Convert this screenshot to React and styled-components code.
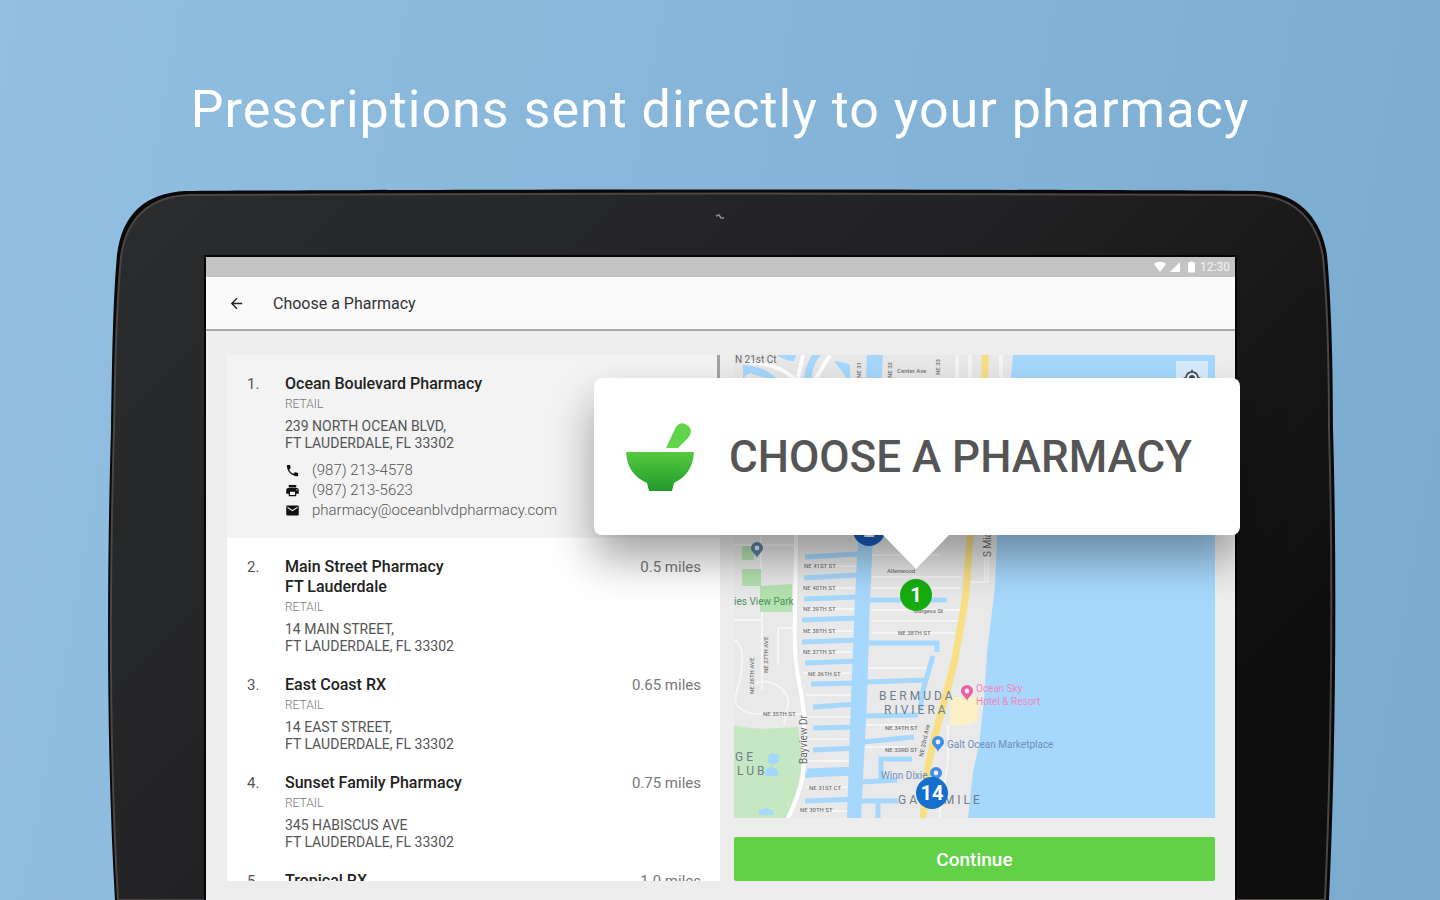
import styled, { createGlobalStyle } from 'styled-components';
import { MdArrowBack, MdEmail, MdGpsFixed, MdPhone, MdPrint } from 'react-icons/md';

const pharmacies = [
  {
    id: 1,
    name: ['Ocean Boulevard Pharmacy'],
    address: ['239 NORTH OCEAN BLVD,', 'FT LAUDERDALE, FL 33302'],
    phone: '(987) 213-4578',
    fax: '(987) 213-5623',
    email: 'pharmacy@oceanblvdpharmacy.com',
  },
  {
    id: 2,
    name: ['Main Street Pharmacy', 'FT Lauderdale'],
    address: ['14 MAIN STREET,', 'FT LAUDERDALE, FL 33302'],
    distance: '0.5 miles',
  },
  {
    id: 3,
    name: ['East Coast RX'],
    address: ['14 EAST STREET,', 'FT LAUDERDALE, FL 33302'],
    distance: '0.65 miles',
  },
  {
    id: 4,
    name: ['Sunset Family Pharmacy'],
    address: ['345 HABISCUS AVE', 'FT LAUDERDALE, FL 33302'],
    distance: '0.75 miles',
  },
  {
    id: 5,
    name: ['Tropical RX'],
    address: [],
    distance: '1.0 miles',
  },
];

export default function App() {
  return (
    <>
      <GlobalStyle />
      <Page>
        <Headline>Prescriptions sent directly to your pharmacy</Headline>
        <Tablet>
          <Casing />
          <Screen>
            <StatusBar>
              <StatusIcons />
              <span>12:30</span>
            </StatusBar>
            <AppBar>
              <BackButton aria-label="Back">
                <MdArrowBack />
              </BackButton>
              <AppTitle>Choose a Pharmacy</AppTitle>
            </AppBar>
            <Content>
              <List>
                {pharmacies.map((pharmacy) => (
                  <Pharmacy key={pharmacy.id} {...pharmacy} />
                ))}
              </List>
              <MapColumn>
                <MapFrame>
                  <StreetMap />
                  <LocateButton aria-label="My location">
                    <MdGpsFixed />
                  </LocateButton>
                </MapFrame>
                <ContinueButton>Continue</ContinueButton>
              </MapColumn>
            </Content>
            <Callout>
              <MortarIcon />
              <span>CHOOSE A PHARMACY</span>
            </Callout>
          </Screen>
        </Tablet>
      </Page>
    </>
  );
}

function Pharmacy({ id, name, address, distance, phone, fax, email }) {
  return (
    <Item $selected={Boolean(phone)}>
      <Number>{id}.</Number>
      <div>
        {name.map((line) => (
          <Name key={line}>{line}</Name>
        ))}
        {address.length > 0 && <Kind>RETAIL</Kind>}
        {address.map((line) => (
          <Address key={line}>{line}</Address>
        ))}
        {phone && (
          <Contacts>
            <Contact href="tel:9872134578">
              <MdPhone />
              {phone}
            </Contact>
            <Contact href="fax:9872135623">
              <MdPrint />
              {fax}
            </Contact>
            <Contact href={`mailto:${email}`}>
              <MdEmail />
              {email}
            </Contact>
          </Contacts>
        )}
      </div>
      <Distance>{distance}</Distance>
    </Item>
  );
}

function Casing() {
  return (
    <CasingSvg viewBox="0 0 1224 712" preserveAspectRatio="none" aria-hidden="true">
      <defs>
        <linearGradient id="bezel" x1="0" y1="0" x2="1" y2="0.6">
          <stop offset="0" stopColor="#2a2c2d" />
          <stop offset="0.55" stopColor="#212123" />
          <stop offset="1" stopColor="#0e0e0e" />
        </linearGradient>
      </defs>
      <path
        d="M5 712C-4 560 -3 380 1 240C2 170 3 110 7 66C12 26 34 4 76 2C300 0 900 0 1148 2C1188 4 1211 28 1217 66C1221 110 1223 170 1223 240C1227 380 1226 560 1219 712Z"
        fill="#0a0808"
      />
      <path
        d="M8 712C-1 560 0 380 4 240C5 170 7 110 11 68C16 31 38 7 80 6C300 4 900 4 1144 6C1184 7 1207 31 1213 68C1217 110 1219 170 1219 240C1223 380 1222 560 1215 712Z"
        fill="url(#bezel)"
        stroke="#4b4643"
        strokeWidth="2"
      />
      <path d="M606 27l3 -1 2 3 3 0" stroke="#8e8e8e" strokeWidth="1.5" fill="none" />
    </CasingSvg>
  );
}

function StatusIcons() {
  return (
    <svg width="42" height="12" viewBox="0 0 42 12" fill="#fff" aria-hidden="true">
      <path d="M0 3.2C3.6 0 8.4 0 12 3.2L6 11Z" />
      <path d="M26 1V11H16Z" />
      <path d="M34 1.6H36V0.6H39V1.6H41V11.4H34Z" />
    </svg>
  );
}

function MortarIcon() {
  return (
    <svg width="68" height="68" viewBox="0 0 68 68" aria-hidden="true">
      <defs>
        <linearGradient id="bowl" x1="0" y1="0" x2="0" y2="1">
          <stop offset="0" stopColor="#55c93f" />
          <stop offset="1" stopColor="#219a2b" />
        </linearGradient>
      </defs>
      <path d="M40 25L48 8C51 1 55 -2 61 2C66 5 66 10 62 15L52 25Z" fill="#60d44a" />
      <path d="M0 29H68C67 45 60 54 48 60L46 68H23L21 60C8 54 1 45 0 29Z" fill="url(#bowl)" />
    </svg>
  );
}

const leftCanals = [
  [805, 557, 554], [804, 578, 575], [804, 599, 597], [802, 620, 618], [802, 642, 640],
  [805, 663, 661], [811, 684, 683], [813, 707, 704], [813, 728, 727], [813, 750, 748],
  [805, 775, 772], [805, 801, 799],
];

const streets = [
  ['NE 41ST ST', 804, 568], ['NE 40TH ST', 803, 590], ['NE 39TH ST', 803, 611],
  ['NE 38TH ST', 803, 633], ['NE 37TH ST', 803, 654], ['NE 36TH ST', 808, 676],
  ['NE 35TH ST', 763, 716], ['NE 31ST CT', 809, 790], ['NE 30TH ST', 800, 812],
  ['NE 38TH ST', 898, 635], ['NE 34TH ST', 885, 730], ['NE 33RD ST', 885, 752],
  ['Allenwood', 887, 573], ['Center Ave', 897, 373], ['Burgess St', 914, 613],
];

function Pin({ x, y, color }) {
  return (
    <g transform={`translate(${x} ${y})`}>
      <path d="M0 8C-1 4 -6 2 -6 -2A6 6 0 0 1 6 -2C6 2 1 4 0 8Z" fill={color} />
      <circle cy="-2" r="2.4" fill="#e9edf2" />
    </g>
  );
}

function Marker({ x, y, color, children }) {
  return (
    <g>
      <circle cx={x} cy={y} r="16" fill={color} />
      <MarkerText x={x} y={y + 7} textAnchor="middle">
        {children}
      </MarkerText>
    </g>
  );
}

function StreetMap() {
  return (
    <MapSvg viewBox="734 355 481 463" preserveAspectRatio="xMidYMid slice" role="img" aria-label="Map">
      <rect x="734" y="355" width="481" height="463" fill="#e9e9e9" />

      {/* parks */}
      <path d="M734 725C755 731 775 728 798 727L802 757C800 785 793 803 787 818H734Z" fill="#c5e7c2" />
      <path d="M742 569H761V586H742ZM760 586L792 584V612H760ZM742 546H754V560H742Z" fill="#b4e2b0" />
      <path d="M951 697H980L977 720C970 727 960 725 950 725Z" fill="#fbf0c8" />

      {/* small streets */}
      <g stroke="#f5f5f5" strokeWidth="2" fill="none">
        <path d="M734 545H795M761 535V569M734 620H762M762 612V690M778 628H796M778 628V665M734 640C748 645 741 680 736 694C732 708 748 718 768 712" />
        <path d="M754 684C770 676 790 690 788 704L784 724M765 714H802" />
        <path d="M872 555H940M872 577H962M872 588H960M872 610H960M872 621H958M872 633H955M866 668H930M866 725H915M866 747H905" />
        <path d="M803 566H856M802 588H855M802 609H855M801 631H853M801 652H852M803 673H850M806 695H850M808 717H850M808 739H849M808 761H849M806 787H848M803 811H847" />
        <path d="M985 535V582H970M988 552V582H970M948 725V750C950 770 940 790 940 818" />
        <path d="M957 355V378M970 355V378M1001 355V378" strokeWidth="4" />
      </g>
      <path
        d="M796 535C796 580 794 620 795 650C796 675 801 685 803 707C805 725 805 745 803 775C801 790 794 805 788 818"
        stroke="#fff"
        strokeWidth="4"
        fill="none"
      />

      {/* water */}
      <g fill="#a6d8fd" stroke="none">
        <path d="M1013 355H1215V818H968L973 772L979 745L984 700L987 653L995 587L997 535Z" />
        <path d="M867 355H883L873 535L870 600L867 700L861 818H847L851 700L855 600L858 535Z" />
        <path d="M743 365C755 366 766 368 776 378H765L750 373L743 378ZM777 355H796L794 361C788 361 782 359 777 355ZM812 355H821C814 363 812 370 812 378H804C805 368 808 362 812 355ZM834 361C842 362 846 363 850 365V378H846C843 371 838 367 834 361Z" />
        <path d="M768 756L772 753L779 755V762L772 765L768 762ZM765 770L771 766L778 770V776H765ZM759 810L767 808L773 811V815H759Z" />
      </g>
      <g stroke="#a6d8fd" strokeWidth="5" fill="none">
        {leftCanals.map(([x, from, to]) => (
          <path key={from} d={`M${x} ${from}L858 ${to}`} />
        ))}
        <path d="M807 773L856 771" strokeWidth="9" />
        <path d="M868 600H947M865 643H937V652M933 656L923 690L920 710M865 682L927 680M862 716L918 715M863 742L914 737M912 759H881V780M860 782L897 780M860 801H898M878 801V818" />
      </g>
      <path d="M745 362C765 362 782 368 794 378M798 378L803 355M816 378L830 355" stroke="#fff" strokeWidth="4" fill="none" />

      {/* coast road */}
      <path
        d="M985 355C985 440 973 480 970 535C968 560 967 585 965 600C962 620 959 636 957 647C955 662 951 675 948 687C942 710 934 735 928 767L923 818"
        stroke="#f9df84"
        strokeWidth="7"
        fill="none"
      />

      <StreetText>
        {streets.map(([name, x, y]) => (
          <text key={`${x}-${y}`} x={x} y={y}>
            {name}
          </text>
        ))}
        <text transform="translate(754 694) rotate(-90)">NE 26TH AVE</text>
        <text transform="translate(768 673) rotate(-90)">NE 27TH AVE</text>
        <text transform="translate(923 757) rotate(-78)">NE 33rd Ave</text>
        <text transform="translate(861 378) rotate(-90)">NE 31</text>
        <text transform="translate(892 378) rotate(-90)">NE 32</text>
        <text transform="translate(940 375) rotate(-90)">NE 33</text>
      </StreetText>
      <PlaceText $color="#6a6a6a">
        <text x="735" y="363">N 21st Ct</text>
        <text transform="translate(807 764) rotate(-90)">Bayview Dr</text>
        <text transform="translate(991 557) rotate(-90)">S Miami Rd</text>
      </PlaceText>
      <PlaceText $color="#4e9460">
        <text x="734" y="605">ies View Park</text>
      </PlaceText>
      <PlaceText $color="#f386bd">
        <text x="976" y="692">Ocean Sky</text>
        <text x="976" y="705">Hotel & Resort</text>
      </PlaceText>
      <PlaceText $color="#6f8fbd">
        <text x="947" y="748">Galt Ocean Marketplace</text>
        <text x="881" y="779">Winn Dixie</text>
      </PlaceText>
      <AreaText>
        <text x="879" y="700">BERMUDA</text>
        <text x="884" y="714">RIVIERA</text>
        <text x="898" y="804">GALT MILE</text>
        <text x="735" y="761">GE</text>
        <text x="737" y="775">LUB</text>
      </AreaText>

      <Pin x={757} y={550} color="#5c84a3" />
      <Pin x={967} y={693} color="#ef5fa5" />
      <Pin x={938} y={744} color="#3f8fe8" />
      <Pin x={936} y={775} color="#3f8fe8" />
      <Marker x={869} y={530} color="#1a5fc0">2</Marker>
      <Marker x={916} y={595} color="#17ad10">1</Marker>
      <Marker x={932} y={793} color="#1470cc">14</Marker>
    </MapSvg>
  );
}

const GlobalStyle = createGlobalStyle`
  * {
    box-sizing: border-box;
  }
  body {
    margin: 0;
    font-family: Roboto, "Liberation Sans", sans-serif;
  }
  button {
    font-family: inherit;
    border: none;
    cursor: pointer;
  }
`;

const Page = styled.main`
  height: 100vh;
  min-height: 640px;
  display: flex;
  flex-direction: column;
  overflow: hidden;
  background: linear-gradient(100deg, #92bfe1 0%, #86b5d9 50%, #7aabcf 100%);
`;

const Headline = styled.h1`
  margin: 0;
  padding: 78px 24px 48px;
  font-size: 52px;
  font-weight: 400;
  line-height: 63px;
  letter-spacing: 1px;
  text-align: center;
  color: #fff;
`;

const Tablet = styled.section`
  position: relative;
  flex: 1;
  min-height: 0;
  display: flex;
  margin: 0 106px 0 110px;
  padding: 68px 99px 0 96px;
`;

const CasingSvg = styled.svg`
  position: absolute;
  inset: 0;
  width: 100%;
  height: 100%;
  overflow: visible;
`;

const Screen = styled.div`
  position: relative;
  flex: 1;
  min-width: 0;
  display: flex;
  flex-direction: column;
  background: #ededed;
  box-shadow: 0 0 0 2px #050505;
`;

const StatusBar = styled.div`
  display: flex;
  align-items: center;
  justify-content: flex-end;
  gap: 4px;
  height: 20px;
  padding-right: 5px;
  font-size: 12px;
  color: #f4f4f4;
  background: #c3c3c3;
`;

const AppBar = styled.header`
  display: flex;
  align-items: center;
  gap: 28px;
  height: 54px;
  padding: 0 22px;
  background: #fafafa;
  border-bottom: 2px solid #a9a9a9;
`;

const BackButton = styled.button`
  display: flex;
  padding: 0;
  font-size: 17px;
  color: #222;
  background: none;
`;

const AppTitle = styled.h2`
  margin: 0;
  font-size: 16px;
  font-weight: 400;
  color: #333;
`;

const Content = styled.div`
  flex: 1;
  min-height: 0;
  display: flex;
  gap: 14px;
  padding: 24px 20px 19px 21px;
`;

const List = styled.ol`
  position: relative;
  flex: 493;
  min-width: 0;
  margin: 0;
  padding: 0;
  list-style: none;
  overflow: hidden;
  background: #fff;

  /* scroll thumb */
  &::after {
    content: '';
    position: absolute;
    top: 0;
    right: 0;
    width: 3px;
    height: 120px;
    background: #a3a3a3;
  }
`;

const Item = styled.li`
  display: grid;
  grid-template-columns: 38px 1fr auto;
  padding: ${(props) => (props.$selected ? '19px 20px 18px' : '19px 19px 1px 20px')};
  background: ${(props) => (props.$selected ? '#f3f3f3' : '#fff')};
`;

const Number = styled.span`
  font-size: 15px;
  line-height: 20px;
  color: #555;
`;

const Name = styled.div`
  font-size: 16px;
  font-weight: 500;
  line-height: 20px;
  color: #222;
`;

const Kind = styled.div`
  margin-bottom: 4px;
  font-size: 12px;
  font-weight: 300;
  line-height: 20px;
  color: #777;
`;

const Address = styled.div`
  font-size: 14px;
  line-height: 17px;
  color: #555;
`;

const Contacts = styled.div`
  display: flex;
  flex-direction: column;
  margin-top: 8px;
`;

const Contact = styled.a`
  display: flex;
  align-items: center;
  gap: 12px;
  font-size: 15px;
  font-weight: 300;
  line-height: 20px;
  color: #555;
  text-decoration: none;

  svg {
    font-size: 15px;
    color: #111;
  }
`;

const Distance = styled.span`
  font-size: 15px;
  line-height: 20px;
  color: #777;
`;

const MapColumn = styled.div`
  flex: 481;
  min-width: 0;
  display: flex;
  flex-direction: column;
  gap: 19px;
`;

const MapFrame = styled.div`
  position: relative;
  flex: 1;
  min-height: 0;
`;

const MapSvg = styled.svg`
  display: block;
  width: 100%;
  height: 100%;
`;

const StreetText = styled.g`
  font-size: 6px;
  font-weight: 500;
  fill: #777;
`;

const PlaceText = styled.g`
  font-size: 10px;
  fill: ${(props) => props.$color};
`;

const AreaText = styled.g`
  font-size: 12px;
  letter-spacing: 3px;
  fill: #6f7d8c;
`;

const MarkerText = styled.text`
  font-size: 20px;
  font-weight: 700;
  fill: #fff;
`;

const LocateButton = styled.button`
  position: absolute;
  top: 6px;
  right: 7px;
  display: flex;
  padding: 8px 7px;
  font-size: 18px;
  color: #444;
  background: #d7edfd;
`;

const ContinueButton = styled.button`
  height: 44px;
  font-size: 19px;
  font-weight: 500;
  color: #fff;
  background: #63d147;
  border-radius: 2px;
`;

const Callout = styled.div`
  position: absolute;
  top: 121px;
  right: -5px;
  display: flex;
  align-items: center;
  gap: 35px;
  height: 157px;
  padding: 0 48px 0 32px;
  font-size: 44px;
  font-weight: 500;
  white-space: nowrap;
  color: #555;
  background: #fff;
  border-radius: 8px;
  box-shadow: 0 24px 44px rgba(0, 0, 0, 0.36);

  &::after {
    content: '';
    position: absolute;
    top: 100%;
    right: 291px;
    width: 66px;
    height: 34px;
    background: #fff;
    clip-path: polygon(0 0, 100% 0, 50% 100%);
  }
`;
